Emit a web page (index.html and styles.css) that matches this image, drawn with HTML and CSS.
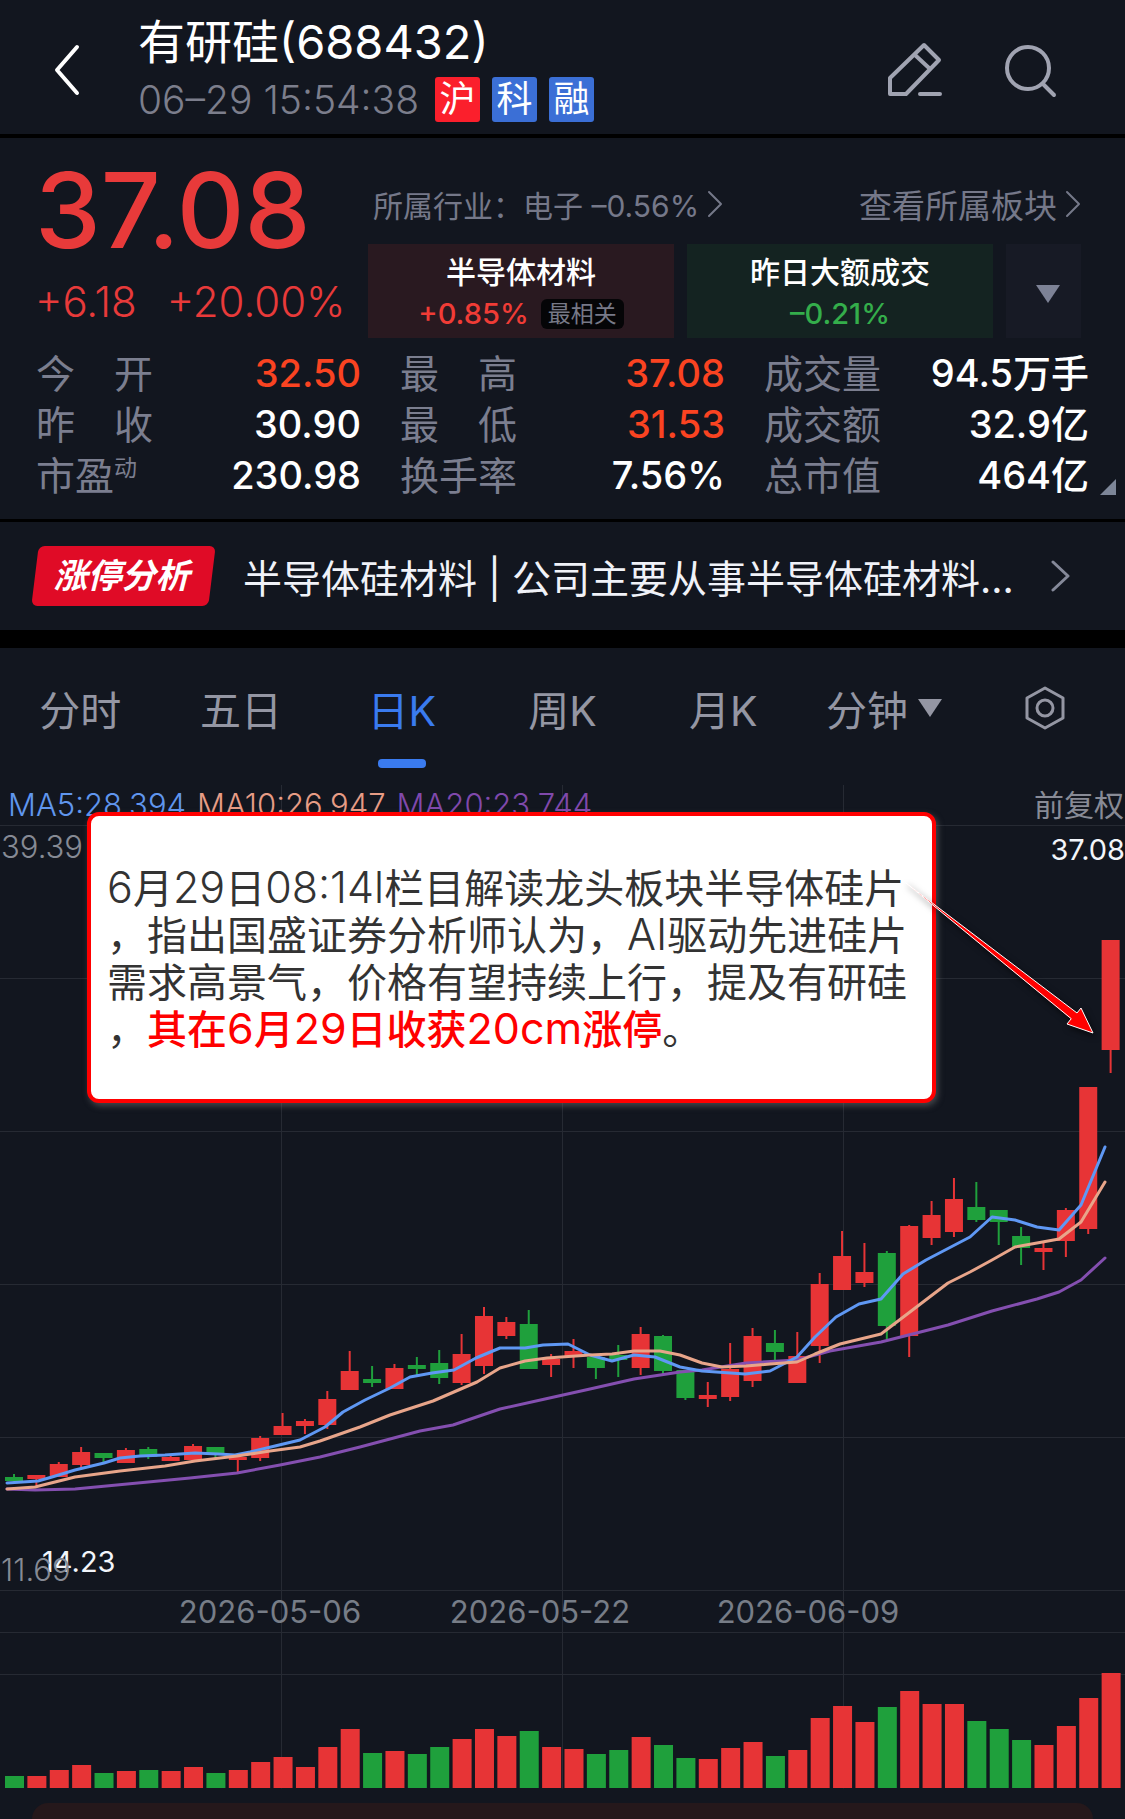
FILE: index.html
```
<!DOCTYPE html>
<html lang="zh-CN">
<head>
    <meta charset="UTF-8">
    <meta name="viewport" content="width=device-width, initial-scale=1">
    <title>有研硅(688432)</title>
    <link rel="stylesheet" href="styles.css">
</head>
<body>
    <!-- 顶部标题栏 -->
    <header class="header">
        <button class="icon-btn back" aria-label="返回">
            <svg width="26" height="52" viewBox="0 0 26 52"><path d="M23 3L3 26L23 49"/></svg>
        </button>
        <div class="header-info">
            <h1>有研硅(688432)</h1>
            <div class="header-sub">
                <span class="time">06–29 15:54:38</span>
                <span class="tag tag-red">沪</span>
                <span class="tag">科</span>
                <span class="tag">融</span>
            </div>
        </div>
        <button class="icon-btn" aria-label="编辑">
            <svg width="56" height="56" viewBox="0 0 56 56"><path d="M37 3L52 18L19 52H3V36Z M28 13L42 26 M33 52H53"/></svg>
        </button>
        <button class="icon-btn" aria-label="搜索">
            <svg width="56" height="56" viewBox="0 0 56 56"><circle cx="25" cy="26" r="21"/><path d="M40 42L51 53"/></svg>
        </button>
    </header>

    <!-- 行情 -->
    <section class="quote">
        <div class="quote-top">
            <div class="price-box">
                <div class="price">37.08</div>
                <div class="change"><span>+6.18</span><span>+20.00%</span></div>
            </div>
            <div class="sector">
                <div class="sector-line">
                    <a href="#" class="industry">所属行业：电子 –0.56%<svg width="16" height="30" viewBox="0 0 16 30"><path d="M2 3L14 15L2 27"/></svg></a>
                    <a href="#" class="blocks">查看所属板块<svg width="16" height="30" viewBox="0 0 16 30"><path d="M2 3L14 15L2 27"/></svg></a>
                </div>
                <div class="cards">
                    <a href="#" class="card card-up">
                        <span class="card-name">半导体材料</span>
                        <span class="card-rate">+0.85% <em>最相关</em></span>
                    </a>
                    <a href="#" class="card card-down">
                        <span class="card-name">昨日大额成交</span>
                        <span class="card-rate">–0.21%</span>
                    </a>
                    <button class="card-more" aria-label="展开"><i class="triangle"></i></button>
                </div>
            </div>
        </div>
        <dl class="stats">
            <div><dt>今　开</dt><dd class="up">32.50</dd></div>
            <div><dt>最　高</dt><dd class="up">37.08</dd></div>
            <div><dt>成交量</dt><dd>94.5万手</dd></div>
            <div><dt>昨　收</dt><dd>30.90</dd></div>
            <div><dt>最　低</dt><dd class="up">31.53</dd></div>
            <div><dt>成交额</dt><dd>32.9亿</dd></div>
            <div><dt>市盈<sup>动</sup></dt><dd>230.98</dd></div>
            <div><dt>换手率</dt><dd>7.56%</dd></div>
            <div><dt>总市值</dt><dd>464亿</dd></div>
        </dl>
        <i class="corner"></i>
    </section>

    <!-- 涨停分析 -->
    <a href="#" class="analysis">
        <span class="analysis-tag">涨停分析</span>
        <span class="analysis-text">半导体硅材料 | 公司主要从事半导体硅材料...</span>
        <svg width="20" height="34" viewBox="0 0 20 34"><path d="M2 3L17 17L2 31"/></svg>
    </a>

    <!-- 周期切换 -->
    <nav class="tabs">
        <button>分时</button>
        <button>五日</button>
        <button class="active">日K</button>
        <button>周K</button>
        <button>月K</button>
        <button>分钟<i class="triangle"></i></button>
        <button aria-label="设置">
            <svg width="40" height="44" viewBox="0 0 40 44"><path d="M20 2L38 12V32L20 42L2 32V12Z"/><circle cx="20" cy="22" r="8"/></svg>
        </button>
    </nav>

    <!-- K线图 -->
    <main class="chart">
        <div class="legend">
            <span class="ma5">MA5:28.394</span>
            <span class="ma10">MA10:26.947</span>
            <span class="ma20">MA20:23.744</span>
            <span class="adjust">前复权</span>
        </div>
        <svg class="kline" id="kline" viewBox="0 785 1125 1018">
            <g class="grid">
                <path d="M0 825.5H1125M0 978.5H1125M0 1131.5H1125M0 1284.5H1125M0 1437.5H1125M0 1590.5H1125M0 1632.5H1125M0 1674.5H1125"/>
                <path d="M281.5 785V1788M562.5 785V1788M843.5 785V1788"/>
            </g>
            <g id="candles"></g>
            <g id="lines"></g>
            <g id="volumes"></g>
            <g class="labels">
                <text x="1" y="858">39.39</text>
                <text x="1125" y="860" text-anchor="end" class="mark">37.08</text>
                <text x="42" y="1572" class="mark">14.23</text>
                <text x="1" y="1581">11.69</text>
                <text x="270" y="1623" text-anchor="middle" class="date">2026-05-06</text>
                <text x="540" y="1623" text-anchor="middle" class="date">2026-05-22</text>
                <text x="808" y="1623" text-anchor="middle" class="date">2026-06-09</text>
            </g>
        </svg>
        <div class="note">
            <p><span class="num">6</span>月<span class="num">29</span>日<span class="num">08:14l</span>栏目解读龙头板块半导体硅片<br>，指出国盛证券分析师认为，<span class="num">AI</span>驱动先进硅片<br>需求高景气，价格有望持续上行，提及有研硅<br>，<strong>其在<span class="num">6</span>月<span class="num">29</span>日收获<span class="num">20cm</span>涨停</strong>。</p>
        </div>
        <svg class="arrow" viewBox="0 785 1125 1018">
            <path d="M906 883L1077 1013L1081 1008L1093 1033L1067 1024L1071 1019Z"/>
        </svg>
    </main>

    <div class="bottom-bar"></div>

    <script src="chart.js"></script>
</body>
</html>
```
FILE: styles.css
```
* {
    margin: 0;
    padding: 0;
    box-sizing: border-box;
}

body {
    font-family: Inter, "Noto Sans CJK SC", sans-serif;
    background: #12161f;
    color: #fff;
    overflow-x: hidden;
}

a {
    color: inherit;
    text-decoration: none;
}

button {
    font: inherit;
    color: inherit;
    background: none;
    border: none;
    cursor: pointer;
}

svg {
    display: block;
    fill: none;
    stroke: currentColor;
    stroke-linecap: round;
    stroke-linejoin: round;
}

/* 标题栏 */
.header {
    display: flex;
    align-items: center;
    height: 138px;
    padding: 6px 66px 0 54px;
    border-bottom: 4px solid #000;
}

.header-info {
    flex: 1;
    margin-left: 58px;
}

.header h1 {
    font-size: 47px;
    font-weight: 400;
    line-height: 58px;
}

.header-sub {
    display: flex;
    align-items: center;
    gap: 12px;
    height: 56px;
}

.time {
    font-size: 39px;
    font-weight: 300;
    color: #7c7e8c;
    margin-right: 4px;
}

.tag {
    width: 45px;
    height: 45px;
    border-radius: 3px;
    background: #3b6fd6;
    font-size: 36px;
    line-height: 44px;
    text-align: center;
}

.tag-red {
    background: #fb1f2c;
}

.icon-btn {
    color: #a0a3b1;
    stroke-width: 4;
}

.icon-btn + .icon-btn {
    margin-left: 60px;
}

.back {
    color: #fff;
}

/* 行情 */
.quote {
    position: relative;
    height: 384px;
    padding-top: 32px;
    border-bottom: 3px solid #000;
}

.quote-top {
    display: flex;
    height: 168px;
}

.price-box {
    width: 368px;
    padding-left: 35px;
    color: #e83a3a;
}

.price {
    font-size: 105px;
    font-weight: 500;
    line-height: 80px;
}

.change {
    display: flex;
    gap: 30px;
    margin-top: 26px;
    font-size: 42px;
    font-weight: 300;
    line-height: 52px;
}

.sector {
    flex: 1;
    padding-right: 44px;
}

.sector-line {
    display: flex;
    justify-content: space-between;
    align-items: center;
    height: 74px;
    padding: 0 0 6px 5px;
    color: #757889;
}

.sector-line a {
    display: flex;
    align-items: center;
    gap: 8px;
    stroke-width: 2;
}

.industry {
    font-size: 30px;
}

.blocks {
    font-size: 33px;
}

.cards {
    display: flex;
    gap: 13px;
    height: 94px;
}

.card {
    flex: 1;
    display: flex;
    flex-direction: column;
    align-items: center;
    padding-top: 7px;
    font-size: 30px;
    line-height: 42px;
    font-weight: 500;
}

.card-up {
    background: #291920;
}

.card-down {
    background: #142321;
}

.card-rate {
    display: flex;
    align-items: center;
    gap: 12px;
    font-size: 29px;
}

.card-up .card-rate {
    color: #f03c36;
}

.card-down .card-rate {
    color: #34ae4b;
}

.card em {
    padding: 0 7px;
    border-radius: 6px;
    background: #050507;
    color: #777987;
    font-size: 23px;
    font-style: normal;
    font-weight: 400;
    line-height: 30px;
}

.card-more {
    width: 75px;
    padding: 10px 0 0 8px;
    background: #171a25;
    color: #7d8296;
}

.triangle {
    display: inline-block;
    border: 12px solid transparent;
    border-top: 18px solid currentColor;
    border-bottom: 0;
}

.stats {
    display: grid;
    grid-template-columns: repeat(3, 1fr);
    column-gap: 39px;
    padding: 10px 36px 0;
    line-height: 51px;
}

.stats div {
    display: flex;
    justify-content: space-between;
    height: 51px;
}

.stats dt {
    color: #7b7e8f;
    font-size: 39px;
}

.stats sup {
    font-size: 23px;
    line-height: 0;
}

.stats dd {
    font-size: 38px;
    font-weight: 500;
}

.stats .up {
    color: #fa4321;
}

.corner {
    position: absolute;
    right: 9px;
    bottom: 24px;
    border-left: 16px solid transparent;
    border-bottom: 16px solid #7d8698;
}

/* 涨停分析 */
.analysis {
    display: flex;
    align-items: center;
    height: 126px;
    padding: 0 54px 0 32px;
    border-bottom: 18px solid #000;
    color: #858999;
    stroke-width: 3;
}

.analysis-tag {
    position: relative;
    z-index: 0;
    width: 183px;
    padding-right: 4px;
    font-size: 34px;
    font-weight: 700;
    font-style: italic;
    line-height: 60px;
    text-align: center;
    color: #fff;
}

.analysis-tag::before {
    content: "";
    position: absolute;
    inset: 0 3px;
    z-index: -1;
    border-radius: 6px;
    background: #e00b26;
    transform: skewX(-7deg);
}

.analysis-text {
    flex: 1;
    margin-left: 28px;
    font-size: 39px;
    white-space: nowrap;
    color: #f0f2f8;
}

/* 周期切换 */
.tabs {
    display: grid;
    grid-template-columns: repeat(7, 1fr);
    height: 137px;
    color: #9496a3;
}

.tabs button {
    position: relative;
    display: flex;
    justify-content: center;
    align-items: center;
    gap: 10px;
    padding-bottom: 18px;
    font-size: 41px;
    stroke-width: 3;
}

.tabs .active {
    color: #3a7bef;
}

.tabs .active::after {
    content: "";
    position: absolute;
    bottom: 17px;
    width: 48px;
    height: 9px;
    border-radius: 4px;
    background: #3a7bef;
}

/* K线图 */
.chart {
    position: relative;
}

.legend {
    position: absolute;
    top: 0;
    left: 8px;
    right: 1px;
    display: flex;
    gap: 11px;
    font-size: 31px;
    font-weight: 300;
    line-height: 40px;
}

.ma5 {
    color: #6096ee;
}

.ma10 {
    color: #e79c85;
}

.ma20 {
    color: #8049ac;
}

.adjust {
    margin-left: auto;
    font-size: 30px;
    font-weight: 400;
    color: #888b96;
}

.kline {
    width: 100%;
    height: auto;
    stroke-linejoin: miter;
}

.grid {
    stroke: #262a33;
}

.red {
    fill: #e73436;
    stroke: #e73436;
}

.green {
    fill: #1fa03c;
    stroke: #1fa03c;
}

.kline rect {
    stroke: none;
}

.kline line {
    stroke-width: 2;
    stroke-linecap: butt;
}

.kline polyline {
    stroke-width: 3;
    stroke-linejoin: round;
}

.line5 {
    stroke: #5f98f4;
}

.line10 {
    stroke: #e8a58a;
}

.line20 {
    stroke: #844fb0;
}

.labels {
    fill: #868a94;
    stroke: none;
    font-size: 31px;
    font-weight: 300;
}

.labels .mark {
    fill: #f2f5fa;
    font-size: 29px;
    font-weight: 400;
}

.labels .date {
    fill: #777d87;
    font-weight: 400;
}

.note {
    position: absolute;
    top: 27px;
    left: 87px;
    right: 189px;
    height: 291px;
    padding: 49px 16px;
    border: 4px solid #f00;
    border-radius: 12px;
    background: #fff;
    box-shadow: 2px 3px 6px rgba(120, 120, 120, 0.5);
    color: #333;
    font-size: 40px;
    line-height: 47px;
    white-space: nowrap;
}

.note .num {
    font-size: 43px;
    font-weight: 300;
    line-height: 1;
}

.note strong {
    color: #f00;
    font-weight: 500;
}

.note strong .num {
    font-weight: 400;
}

.arrow {
    position: absolute;
    inset: 0;
    width: 100%;
    pointer-events: none;
    fill: #f00;
    stroke: #fff;
    stroke-width: 1;
    stroke-linejoin: miter;
    filter: drop-shadow(2px 3px 3px rgba(0, 0, 0, 0.6));
}

.bottom-bar {
    height: 16px;
    margin: 0 32px;
    border-radius: 16px 16px 0 0;
    background: #25181b;
}
```
FILE: chart.js
```
const NS = 'http://www.w3.org/2000/svg';
const STEP = 22.38;

// 涨跌, 最高, 实体上沿, 实体下沿, 最低, 成交量
const data = [
    ['g', 1474, 1477, 1481, 1482, 12], ['r', 1475, 1475, 1479, 1485, 12],
    ['r', 1462, 1464, 1477, 1477, 18], ['r', 1447, 1452, 1465, 1468, 23],
    ['g', 1453, 1453, 1458, 1463, 15], ['r', 1448, 1450, 1463, 1463, 17],
    ['g', 1447, 1449, 1457, 1459, 18], ['r', 1455, 1457, 1461, 1461, 17],
    ['r', 1444, 1446, 1460, 1460, 21], ['g', 1447, 1447, 1455, 1458, 15],
    ['r', 1457, 1457, 1460, 1472, 18], ['r', 1436, 1438, 1458, 1461, 26],
    ['r', 1413, 1426, 1435, 1435, 31], ['r', 1419, 1421, 1426, 1434, 21],
    ['r', 1391, 1399, 1425, 1429, 41], ['r', 1351, 1371, 1390, 1390, 59],
    ['g', 1366, 1379, 1383, 1387, 35], ['r', 1364, 1368, 1389, 1389, 37],
    ['g', 1357, 1365, 1369, 1375, 34], ['g', 1350, 1363, 1378, 1384, 41],
    ['r', 1334, 1354, 1383, 1385, 49], ['r', 1307, 1316, 1366, 1374, 59],
    ['r', 1317, 1322, 1336, 1339, 52], ['g', 1310, 1324, 1369, 1369, 57],
    ['r', 1354, 1359, 1365, 1377, 41], ['r', 1339, 1351, 1356, 1368, 39],
    ['g', 1357, 1357, 1368, 1379, 34], ['g', 1345, 1355, 1360, 1377, 38],
    ['r', 1327, 1334, 1368, 1375, 51], ['g', 1335, 1336, 1371, 1374, 43],
    ['g', 1370, 1370, 1398, 1400, 30], ['r', 1382, 1395, 1399, 1407, 29],
    ['r', 1343, 1369, 1397, 1401, 40], ['r', 1328, 1336, 1381, 1387, 46],
    ['g', 1330, 1343, 1352, 1360, 32], ['r', 1332, 1356, 1383, 1383, 38],
    ['r', 1273, 1284, 1346, 1363, 70], ['r', 1231, 1256, 1290, 1290, 82],
    ['r', 1243, 1272, 1283, 1287, 66], ['g', 1251, 1253, 1326, 1339, 81],
    ['r', 1225, 1226, 1336, 1357, 97], ['r', 1201, 1215, 1238, 1245, 84],
    ['r', 1178, 1199, 1232, 1237, 84], ['g', 1182, 1207, 1220, 1222, 67],
    ['g', 1210, 1210, 1222, 1245, 59], ['g', 1227, 1236, 1248, 1265, 48],
    ['r', 1242, 1248, 1252, 1270, 43], ['r', 1208, 1210, 1241, 1257, 62],
    ['r', 1087, 1087, 1229, 1234, 90], ['r', 940, 940, 1050, 1073, 115]
];

// 均线
const lines = {
    line20: '7,1489 35,1490 75,1489 190,1478 237,1473 280,1465 320,1457 360,1447 420,1431 453,1425 500,1409 545,1399 590,1389 634,1379 680,1372 702,1370 746,1363 797,1360 830,1351 881,1342 948,1325 992,1311 1037,1299 1059,1292 1081,1280 1105,1258',
    line5: '7,1483 38,1481 52,1477 75,1470 104,1463 120,1458 140,1456 165,1455 195,1453 218,1454 235,1455 250,1452 275,1446 300,1440 325,1427 343,1412 365,1400 390,1388 410,1377 432,1373 454,1370 476,1358 500,1348 525,1348 543,1345 568,1344 590,1355 612,1361 634,1355 655,1357 680,1367 702,1371 745,1374 770,1371 797,1357 815,1337 836,1317 859,1304 881,1299 903,1274 926,1260 970,1237 992,1217 1015,1220 1037,1227 1059,1230 1081,1205 1105,1147',
    line10: '7,1489 35,1487 75,1477 120,1471 165,1466 195,1461 237,1456 270,1451 300,1447 320,1441 360,1427 390,1415 433,1401 477,1382 500,1368 525,1361 547,1358 590,1355 612,1354 634,1351 660,1351 680,1355 702,1363 722,1367 746,1366 770,1364 797,1362 815,1354 840,1344 881,1334 948,1283 970,1272 992,1260 1015,1247 1037,1243 1059,1239 1081,1222 1105,1182'
};

function add(parent, name, attrs) {
    const el = document.createElementNS(NS, name);
    for (const key in attrs) {
        el.setAttribute(key, attrs[key]);
    }
    document.getElementById(parent).appendChild(el);
}

data.forEach(([type, high, top, bottom, low, vol], i) => {
    const x = 5 + i * STEP;
    const cls = type === 'r' ? 'red' : 'green';
    add('candles', 'line', { class: cls, x1: x + 9, x2: x + 9, y1: high, y2: low });
    add('candles', 'rect', { class: cls, x: x, y: top, width: 18, height: bottom - top });
    add('volumes', 'rect', { class: cls, x: x, y: 1788 - vol, width: 19, height: vol });
});

for (const name in lines) {
    add('lines', 'polyline', { class: name, points: lines[name] });
}
```
